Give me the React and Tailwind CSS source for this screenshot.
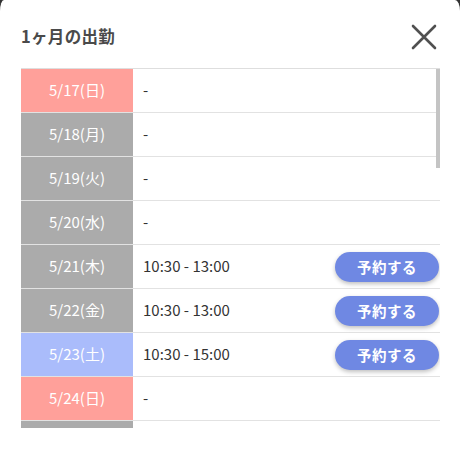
import React from "react";

const WD = ["日", "月", "火", "水", "木", "金", "土"];

function buildDays() {
  const days = [];
  const start = new Date(2020, 4, 17);
  const times = { "5/21": "10:30 - 13:00", "5/22": "10:30 - 13:00", "5/23": "10:30 - 15:00", "5/28": "10:30 - 13:00", "5/29": "10:30 - 13:00", "6/4": "10:30 - 13:00", "6/5": "10:30 - 13:00" };
  for (let i = 0; i < 31; i++) {
    const d = new Date(start.getTime() + i * 86400000);
    const key = `${d.getMonth() + 1}/${d.getDate()}`;
    days.push({ key, label: `${key}(${WD[d.getDay()]})`, wd: d.getDay(), time: times[key] || null });
  }
  return days;
}

export default function App() {
  const days = buildDays();
  return (
    <div className="w-[460px] h-[459px] bg-[#333333] overflow-hidden" style={{ fontFamily: '"Noto Sans CJK JP", "Noto Sans", sans-serif' }}>
      <div className="h-full bg-white rounded-tl-[4px_11px] rounded-tr-[5px_11px] pl-[21px] pr-[20px]">
        <div className="flex items-center justify-between h-[44px] pt-[14px] box-content">
          <h1 className="text-[16.5px] font-bold text-[#4a4a4a] tracking-[0.3px]">1ヶ月の出勤</h1>
          <svg width="28" height="28" viewBox="0 0 28 28" className="mr-[2px] mt-[2px]">
            <path d="M3 3 L25 25 M25 3 L3 25" stroke="#505050" strokeWidth="2.6" strokeLinecap="round" fill="none" />
          </svg>
        </div>
        <div className="relative mt-[10px] h-[360px] border-t border-[#dedede]">
          <div className="h-full overflow-y-auto [scrollbar-width:none]">
            {days.map((d) => {
              const bg = d.wd === 0 ? "bg-[#ffa09a]" : d.wd === 6 ? "bg-[#aabcfb]" : "bg-[#ababab]";
              return (
                <div key={d.key} className="flex h-[44px] border-b border-[#e2e2e2]">
                  <div className={`w-[112px] shrink-0 flex items-center justify-center text-white text-[15px] ${bg}`}>{d.label}</div>
                  <div className="flex-1 flex items-center justify-between pl-[10px] pr-[1px] text-[15px] text-[#333333]">
                    <span>{d.time ? d.time : "-"}</span>
                    {d.time && (
                      <button className="w-[104px] h-[30px] rounded-full bg-[#6f88e3] text-white text-[14.5px] font-bold tracking-[0.5px] shadow-[0_2px_4px_rgba(0,0,0,0.25)]">予約する</button>
                    )}
                  </div>
                </div>
              );
            })}
          </div>
          <div className="absolute right-0 top-0 w-[4px] h-[99px] bg-[#c4c4c4]" />
        </div>
      </div>
    </div>
  );
}
